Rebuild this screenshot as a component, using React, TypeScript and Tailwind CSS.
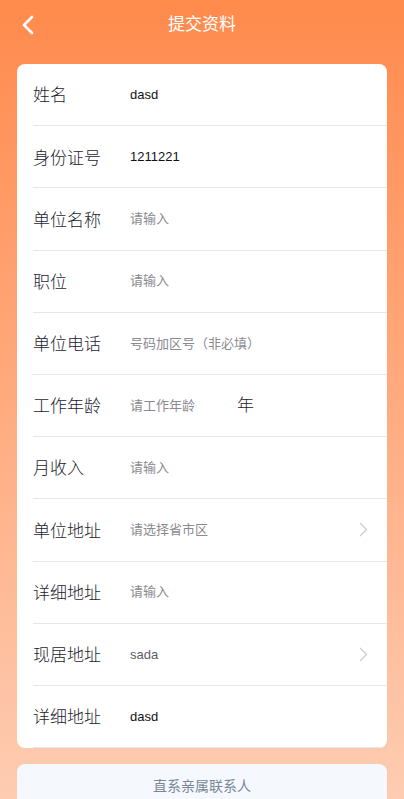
import React from "react";

type Row = {
    label: string;
    value?: string;
    placeholder?: string;
    arrow?: boolean;
    unit?: string;
};

const rows: Row[] = [
    { label: "姓名", value: "dasd" },
    { label: "身份证号", value: "1211221" },
    { label: "单位名称", placeholder: "请输入" },
    { label: "职位", placeholder: "请输入" },
    { label: "单位电话", placeholder: "号码加区号（非必填）" },
    { label: "工作年龄", placeholder: "请工作年龄", unit: "年" },
    { label: "月收入", placeholder: "请输入" },
    { label: "单位地址", placeholder: "请选择省市区", arrow: true },
    { label: "详细地址", placeholder: "请输入" },
    { label: "现居地址", value: "sada", arrow: true },
    { label: "详细地址", value: "dasd" },
];

const ChevronRight = () => (
    <svg width="9" height="15" viewBox="0 0 9 15" fill="none">
        <path d="M1 1l6.5 6.5L1 14" stroke="#c9cbd1" strokeWidth="1.3" />
    </svg>
);

const FormRow = ({ row }: { row: Row }) => (
    <div className="flex h-[62.2px] items-center border-b border-[#e6e7eb] pr-[19px]">
        <div className="w-[97px] shrink-0 pt-[3px] text-[17px] font-light text-[#1c1c2e]">{row.label}</div>
        {row.unit ? (
            <div className="flex flex-1 items-center">
                <span className="w-[107px] text-[13px] text-[#8a8a8f]">{row.placeholder}</span>
                <span className="text-[17px] font-light text-[#1c1c2e]">{row.unit}</span>
            </div>
        ) : (
            <div className={`flex-1 text-[13px] ${row.value ? (row.arrow ? "text-[#5c5c66]" : "text-[#111]") : "text-[#8a8a8f]"}`}>
                {row.value ?? row.placeholder}
            </div>
        )}
        {row.arrow && <ChevronRight />}
    </div>
);

export default function App() {
    return (
        <div
            className="min-h-[799px] w-full bg-gradient-to-b from-[#ff8a4c] via-[#ffab7f] to-[#fdcdb3] px-[17px]"
            style={{ fontFamily: '"Liberation Sans", "Noto Sans CJK SC", sans-serif' }}
        >
            {/* Header */}
            <div className="relative flex h-[50px] items-center justify-center">
                <button className="absolute left-[4px] top-[15px]">
                    <svg width="13" height="20" viewBox="0 0 13 20" fill="none">
                        <path d="M11 2L3 10l8 8" stroke="#fff" strokeWidth="2.6" strokeLinecap="round" strokeLinejoin="round" />
                    </svg>
                </button>
                <h1 className="text-[17px] text-white">提交资料</h1>
            </div>

            {/* Form card */}
            <div className="mt-[14px] overflow-hidden rounded-[8px] bg-white pl-4">
                {rows.map((row, i) => (
                    <FormRow key={i} row={row} />
                ))}
            </div>

            {/* Contact section */}
            <div className="mt-4 flex h-[48px] items-start justify-center rounded-t-[8px] bg-[#f5f8fd] pt-[12px]">
                <span className="text-[14px] text-[#7a8799]">直系亲属联系人</span>
            </div>
        </div>
    );
}
